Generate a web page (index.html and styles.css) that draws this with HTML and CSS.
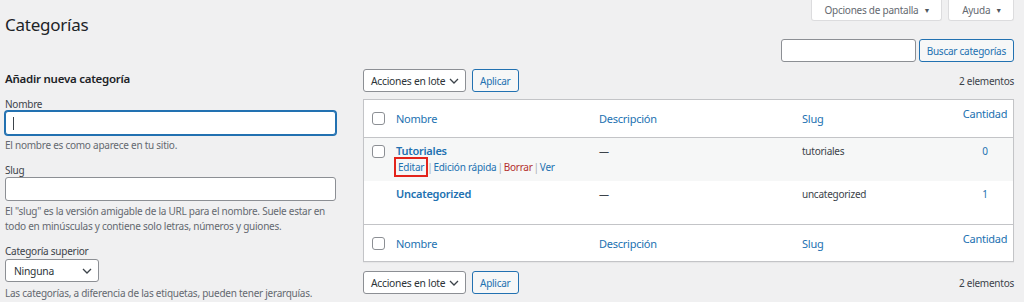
FILE: index.html
```html
<!DOCTYPE html>
<html lang="es">
<head>
  <meta charset="UTF-8" />
  <title>Categorías</title>
  <link rel="stylesheet" href="styles.css">
</head>
<body>
  <div class="wrap">
    <div class="head">
      <h1>Categorías</h1>
      <div class="meta-links">
        <span class="meta-tab">Opciones de pantalla <span class="tri">▼</span></span>
        <span class="meta-tab">Ayuda <span class="tri">▼</span></span>
      </div>
    </div>

    <div class="search-row">
      <span class="input search-input"></span>
      <span class="btn">Buscar categorías</span>
    </div>

    <div class="cols">
      <div class="col-left">
        <h2>Añadir nueva categoría</h2>

        <div class="field">
          <label>Nombre</label>
          <span class="input wide focused"><span class="caret"></span></span>
          <p class="help">El nombre es como aparece en tu sitio.</p>
        </div>

        <div class="field">
          <label>Slug</label>
          <span class="input wide"></span>
          <p class="help">El "slug" es la versión amigable de la URL para el nombre. Suele estar en todo en minúsculas y contiene solo letras, números y guiones.</p>
        </div>

        <div class="field">
          <label>Categoría superior</label>
          <span class="select parent-select">Ninguna
            <svg class="chev" width="10" height="6" viewBox="0 0 10 6"><path d="M1 1l4 4 4-4" fill="none" stroke="#3c434a" stroke-width="1.3"/></svg>
          </span>
          <p class="help">Las categorías, a diferencia de las etiquetas, pueden tener jerarquías.</p>
        </div>
      </div>

      <div class="col-right">
        <div class="tablenav">
          <span class="select bulk-select">Acciones en lote
            <svg class="chev" width="10" height="6" viewBox="0 0 10 6"><path d="M1 1l4 4 4-4" fill="none" stroke="#3c434a" stroke-width="1.3"/></svg>
          </span>
          <span class="btn">Aplicar</span>
          <span class="count">2 elementos</span>
        </div>

        <div class="table">
          <div class="row row-head">
            <span class="cell cb"><span class="checkbox"></span></span>
            <span class="cell name"><a>Nombre</a></span>
            <span class="cell desc"><a>Descripción</a></span>
            <span class="cell slug"><a>Slug</a></span>
            <span class="cell posts"><a>Cantidad</a></span>
          </div>
          <div class="row row-alt">
            <span class="cell cb"><span class="checkbox"></span></span>
            <span class="cell name">
              <a class="title">Tutoriales</a>
              <span class="actions">
                <a class="boxed">Editar</a><span class="sep">|</span><a>Edición rápida</a><span class="sep">|</span><a class="delete">Borrar</a><span class="sep">|</span><a>Ver</a>
              </span>
            </span>
            <span class="cell desc text">—</span>
            <span class="cell slug text">tutoriales</span>
            <span class="cell posts"><a>0</a></span>
          </div>
          <div class="row">
            <span class="cell cb"></span>
            <span class="cell name"><a class="title">Uncategorized</a></span>
            <span class="cell desc text">—</span>
            <span class="cell slug text">uncategorized</span>
            <span class="cell posts"><a>1</a></span>
          </div>
          <div class="row row-foot">
            <span class="cell cb"><span class="checkbox"></span></span>
            <span class="cell name"><a>Nombre</a></span>
            <span class="cell desc"><a>Descripción</a></span>
            <span class="cell slug"><a>Slug</a></span>
            <span class="cell posts"><a>Cantidad</a></span>
          </div>
        </div>

        <div class="tablenav bottom">
          <span class="select bulk-select">Acciones en lote
            <svg class="chev" width="10" height="6" viewBox="0 0 10 6"><path d="M1 1l4 4 4-4" fill="none" stroke="#3c434a" stroke-width="1.3"/></svg>
          </span>
          <span class="btn">Aplicar</span>
          <span class="count">2 elementos</span>
        </div>
      </div>
    </div>
  </div>
</body>
</html>
```

FILE: styles.css
```css
body {
  margin: 0;
  background: #f0f0f1;
  font-family: 'Noto Sans', Arial, sans-serif;
  font-size: 10px;
  letter-spacing: -0.25px;
  color: #3c434a;
}
.wrap {
  padding: 0 10px 0 5px;
}
a {
  color: #2271b1;
}
.head {
  display: flex;
  justify-content: space-between;
  align-items: flex-start;
}
h1 {
  margin: 13px 0 0;
  font-size: 17px;
  line-height: 24px;
  font-weight: 400;
  color: #1d2327;
}
.meta-links {
  display: flex;
  gap: 6px;
}
.meta-tab {
  height: 21px;
  box-sizing: border-box;
  padding: 0 11px 0 13px;
  display: flex;
  align-items: center;
  gap: 5px;
  background: #fff;
  border: 1px solid #dcdcde;
  border-top: none;
  border-radius: 0 0 3px 3px;
  color: #646970;
  font-size: 10px;
}
.tri {
  font-size: 7px;
  color: #50575e;
}
.search-row {
  display: flex;
  justify-content: flex-end;
  gap: 3px;
  margin-top: 2px;
}
.input {
  display: block;
  box-sizing: border-box;
  height: 23px;
  background: #fff;
  border: 1px solid #8c8f94;
  border-radius: 3px;
}
.search-input {
  width: 135px;
}
.btn {
  height: 23px;
  box-sizing: border-box;
  padding: 0 7px;
  display: inline-flex;
  align-items: center;
  background: #f6f7f7;
  border: 1px solid #2271b1;
  border-radius: 3px;
  color: #2271b1;
  white-space: nowrap;
}
.cols {
  display: flex;
  gap: 27px;
}
.col-left {
  width: 331px;
  flex: none;
}
.col-right {
  flex: 1;
}
h2 {
  margin: 10px 0 0;
  font-size: 11.5px;
  line-height: 14px;
  font-weight: 600;
  color: #1d2327;
}
.field {
  margin-top: 11px;
}
.field + .field {
  margin-top: 10px;
}
.field label {
  display: block;
  line-height: 14px;
}
.wide {
  width: 100%;
  height: 24px;
  position: relative;
}
.focused {
  border-color: #2271b1;
  box-shadow: 0 0 0 1px #2271b1;
}
.caret {
  position: absolute;
  left: 7px;
  top: 5px;
  width: 1px;
  height: 13px;
  background: #3c434a;
}
.help {
  margin: 3px 0 0;
  line-height: 15px;
  color: #646970;
}
.select {
  height: 23px;
  box-sizing: border-box;
  padding: 0 6px 0 8px;
  display: inline-flex;
  align-items: center;
  justify-content: space-between;
  background: #fff;
  border: 1px solid #8c8f94;
  border-radius: 3px;
  color: #2c3338;
  font-size: 10.3px;
  white-space: nowrap;
}
.parent-select {
  width: 94px;
  margin-top: 1px;
}
.parent-select + .help {
  margin-top: 4px;
}
.bulk-select {
  width: 103px;
  padding-left: 7px;
}
.tablenav {
  display: flex;
  align-items: center;
  gap: 6px;
  margin-top: 7px;
  height: 23px;
}
.tablenav .count {
  margin-left: auto;
  color: #3c434a;
}
.tablenav.bottom {
  margin-top: 9px;
}
.table {
  margin-top: 7px;
  background: #fff;
  border: 1px solid #c3c4c7;
  box-shadow: 0 1px 1px rgba(0,0,0,0.04);
}
.row {
  display: flex;
  height: 43px;
  box-sizing: border-box;
}
.row-head {
  height: 38px;
  border-bottom: 1px solid #c3c4c7;
  align-items: center;
  font-size: 11px;
}
.row-foot {
  height: 37px;
  border-top: 1px solid #c3c4c7;
  align-items: center;
  font-size: 11px;
}
.row-alt {
  background: #f6f7f7;
}
.cell {
  box-sizing: border-box;
}
.cb {
  width: 32px;
  padding-left: 8px;
  flex: none;
}
.name, .desc {
  width: 203px;
  flex: none;
}
.slug {
  width: 155px;
  flex: none;
}
.posts {
  flex: 1;
  text-align: center;
}
.row-head .posts, .row-foot .posts {
  align-self: flex-start;
  padding-top: 6px;
}
.row:not(.row-head):not(.row-foot) .cell {
  padding-top: 6px;
}
.row:not(.row-head):not(.row-foot) .cb {
  padding-top: 7px;
}
.checkbox {
  display: block;
  width: 13px;
  height: 13px;
  box-sizing: border-box;
  border: 1px solid #8c8f94;
  border-radius: 3px;
  background: #fff;
}
.title {
  display: block;
  font-weight: 600;
  font-size: 11px;
  line-height: 14px;
}
.actions {
  display: block;
  margin-top: 2px;
  line-height: 14px;
}
.boxed {
  outline: 2px solid #e3241b;
  outline-offset: 0;
  padding: 1px 2px;
}
.delete {
  color: #b32d2e;
}
.sep {
  color: #a7aaad;
  margin: 0 1px;
}
.text {
  line-height: 14px;
}
```
